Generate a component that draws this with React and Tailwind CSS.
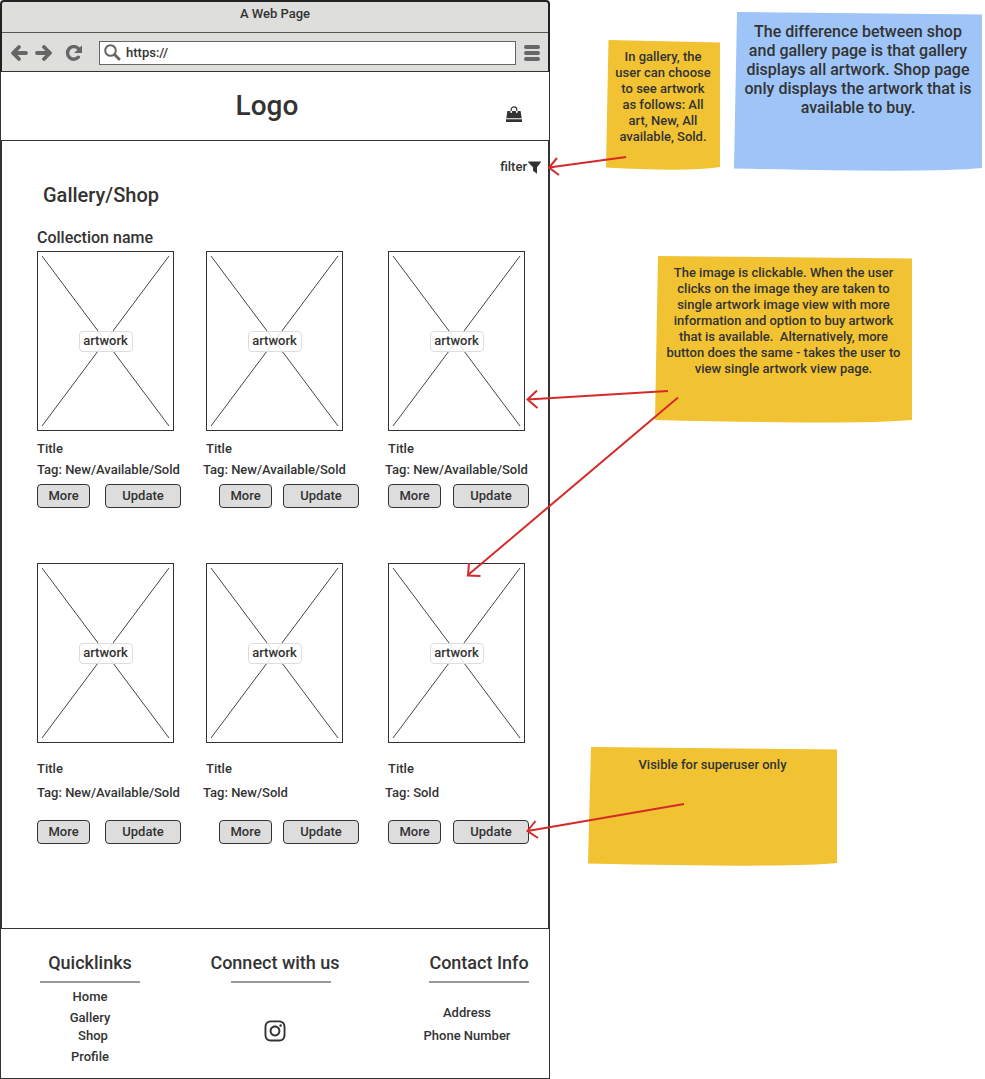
import { FaInstagram } from "react-icons/fa6";

const row1 = [
  { tag: "New/Available/Sold" },
  { tag: "New/Available/Sold" },
  { tag: "New/Available/Sold" },
];

const row2 = [{ tag: "New/Available/Sold" }, { tag: "New/Sold" }, { tag: "Sold" }];

const imageOffsets = ["", "ml-[3px]", "ml-[3px]"];
const buttonOffsets = ["gap-[15px]", "ml-4 gap-[11px]", "ml-[3px] gap-3"];

function BackIcon() {
  return (
    <svg className="size-[18px]" viewBox="0 0 18 18" fill="none" stroke="#666" strokeWidth="3.8" strokeLinecap="round" strokeLinejoin="round">
      <path d="M9 3 L3 9 L9 15 M4 9 H16" />
    </svg>
  );
}

function ForwardIcon() {
  return (
    <svg className="size-[18px]" viewBox="0 0 18 18" fill="none" stroke="#666" strokeWidth="3.8" strokeLinecap="round" strokeLinejoin="round">
      <path d="M9 3 L15 9 L9 15 M14 9 H2" />
    </svg>
  );
}

function ReloadIcon() {
  return (
    <svg className="size-[18px]" viewBox="0 0 18 18">
      <path d="M13.2 4.4 A6.3 6.3 0 1 0 13.4 13.2" fill="none" stroke="#666" strokeWidth="3.4" strokeLinecap="round" />
      <path d="M17 1.2 V9 H9.2 Z" fill="#666" />
    </svg>
  );
}

function SearchIcon() {
  return (
    <svg className="size-[17px] shrink-0" viewBox="0 0 17 17" fill="none" stroke="#666" strokeLinecap="round">
      <circle cx="6.5" cy="6.5" r="5.3" strokeWidth="2" />
      <path d="M11 11 L15 15" strokeWidth="3" />
    </svg>
  );
}

function MenuIcon() {
  return (
    <svg className="size-4" viewBox="0 0 16 16" fill="#666">
      <rect width="16" height="4" rx="2" />
      <rect y="6" width="16" height="4" rx="2" />
      <rect y="12" width="16" height="4" rx="2" />
    </svg>
  );
}

function BagIcon() {
  return (
    <svg className="size-4" viewBox="0 0 16 16">
      <path d="M5.2 5 V3.6 A2.8 2.8 0 0 1 10.8 3.6 V5" fill="none" stroke="#333" strokeWidth="1.2" />
      <path d="M1.4 5 H4.3 V6 A0.9 0.9 0 0 0 6.1 6 V5 H9.9 V6 A0.9 0.9 0 0 0 11.7 6 V5 H14.6 L15.7 12.2 H0.3 Z M0 13.2 H16 V16 H0 Z" fill="#333" />
    </svg>
  );
}

function FunnelIcon() {
  return (
    <svg className="h-[13px] w-[13px]" viewBox="0 0 13 13" fill="#333">
      <path d="M0.3 0.5 H12.7 V1.6 L9 6.2 V12.8 L5 9.8 V6.2 L0.3 1.6 Z" />
    </svg>
  );
}

function Artwork({ offset }) {
  return (
    <a href="#artwork" className={`${offset} grid h-[180px] w-[137px] place-items-center border border-[#333]`}>
      <svg className="col-start-1 row-start-1 size-full" viewBox="0 0 135 178" stroke="#444" strokeWidth="1">
        <path d="M4 4 L131 174 M131 4 L4 174" />
      </svg>
      <span className="z-10 col-start-1 row-start-1 flex h-[21px] w-[54px] items-center justify-center rounded border border-[#ddd] bg-white/85">
        artwork
      </span>
    </a>
  );
}

function Button({ children, size }) {
  return (
    <button type="button" className={`${size} h-6 cursor-pointer rounded border border-[#333] bg-[#ddd]`}>
      {children}
    </button>
  );
}

function Card({ tag, column, spacious }) {
  return (
    <article className="flex flex-col">
      <Artwork offset={imageOffsets[column]} />
      <h3 className={`${imageOffsets[column]} ${spacious ? "mt-[18px]" : "mt-[10px]"} leading-4`}>Title</h3>
      <p className={`${spacious ? "mt-2 mb-[19px]" : "mt-[5px] mb-[6px]"} whitespace-nowrap leading-4`}>Tag: {tag}</p>
      <div className={`${buttonOffsets[column]} flex`}>
        <Button size="w-[53px]">More</Button>
        <Button size="w-[76px]">Update</Button>
      </div>
    </article>
  );
}

function Note({ className, color, path, viewBox, children }) {
  return (
    <aside className={`${className} relative shrink-0 text-center`}>
      <svg className="absolute inset-0 size-full" viewBox={viewBox} preserveAspectRatio="none">
        <path d={path} fill={color} />
      </svg>
      <p className="relative whitespace-pre">{children}</p>
    </aside>
  );
}

function Arrows() {
  return (
    <svg
      className="pointer-events-none absolute inset-0 z-20 size-full"
      viewBox="0 0 985 1079"
      preserveAspectRatio="none"
      fill="none"
      stroke="#d42a2a"
      strokeWidth="2"
    >
      <path d="M626 157 L549 167.5 M557 158 L549 167.5 L559 175" />
      <path d="M668 391 L527.5 399.5 M537 390.5 L527.5 399.5 L537.5 408" />
      <path d="M678 397.5 L468 575 M469 563 L468 575.5 L480.5 576" />
      <path d="M684 804 L527.5 831 M535.5 821 L527.5 831 L538 838" />
    </svg>
  );
}

function FooterHeading({ children, rule }) {
  return (
    <>
      <h2 className="text-[18px] leading-6 whitespace-nowrap">{children}</h2>
      <hr className={`${rule} mt-[6px] h-[2px] w-[100px] border-0 bg-[#999]`} />
    </>
  );
}

export default function App() {
  return (
    <div className="relative grid grid-cols-[550fr_435fr] bg-white font-['Roboto','Liberation_Sans',sans-serif] text-[13px] font-medium text-[#333]">
      <div className="flex flex-col">
        <div className="rounded-t border-x-2 border-t-2 border-b border-[#222] border-b-[#333] bg-[#dededc]">
          <div className="flex h-[31px] justify-center border-b border-[#555] pt-1 leading-4">A Web Page</div>
          <div className="flex h-[38px] items-center pt-px pr-2 pl-2">
            <button type="button" aria-label="Back"><BackIcon /></button>
            <button type="button" aria-label="Forward" className="ml-[7px]"><ForwardIcon /></button>
            <button type="button" aria-label="Reload" className="ml-3"><ReloadIcon /></button>
            <label className="ml-4 flex h-6 flex-1 items-center gap-[5px] border border-[#666] bg-white pl-1">
              <SearchIcon />
              <input type="text" aria-label="Address" defaultValue="https://" className="min-w-0 flex-1 outline-none" />
            </label>
            <button type="button" aria-label="Menu" className="ml-2"><MenuIcon /></button>
          </div>
        </div>

        <header className="grid h-[69px] grid-cols-3 items-center border-x border-b border-[#333] px-[27px]">
          <h1 className="col-start-2 justify-self-center pr-4 text-[28px] leading-8">Logo</h1>
          <button type="button" aria-label="Shopping bag" className="mt-4 justify-self-end"><BagIcon /></button>
        </header>

        <main className="border-x-2 border-[#333] pb-[84px]">
          <div className="flex justify-end pt-[18px] pr-[7px]">
            <button type="button" className="flex items-center gap-px leading-4">
              filter <FunnelIcon />
            </button>
          </div>
          <h2 className="mt-2 ml-[41px] text-[20px] leading-6">Gallery/Shop</h2>
          <h3 className="mt-[21px] ml-[35px] text-[16px] leading-5">Collection name</h3>
          <div className="mt-[3px] grid grid-cols-[166fr_182fr_161fr] gap-y-[55px] pr-[2px] pl-[35px]">
            {row1.map((item, i) => (
              <Card key={i} column={i} {...item} />
            ))}
            {row2.map((item, i) => (
              <Card key={i} column={i} spacious {...item} />
            ))}
          </div>
        </main>

        <footer className="grid h-[151px] grid-cols-[178fr_192fr_178fr] border border-[#333] pt-[22px] text-center">
          <nav className="flex flex-col items-center">
            <FooterHeading rule="">Quicklinks</FooterHeading>
            <a href="#home" className="mt-[6px] leading-4">Home</a>
            <a href="#gallery" className="mt-[5px] leading-4">Gallery</a>
            <a href="#shop" className="mt-[2px] pl-[6px] leading-4">Shop</a>
            <a href="#profile" className="mt-[5px] leading-4">Profile</a>
          </nav>
          <section className="flex flex-col items-center">
            <FooterHeading rule="ml-3">Connect with us</FooterHeading>
            <a href="#instagram" aria-label="Instagram" className="mt-9">
              <FaInstagram className="size-6" />
            </a>
          </section>
          <section className="flex flex-col items-center pl-[38px]">
            <FooterHeading rule="">Contact Info</FooterHeading>
            <p className="mt-[22px] pr-6 leading-4">Address</p>
            <p className="mt-[7px] pr-6 leading-4 whitespace-nowrap">Phone Number</p>
          </section>
        </footer>
      </div>

      <div className="flex flex-col pt-3">
        <div className="flex items-start gap-[14px] pl-14">
          <Note
            className="mt-7 h-[130px] w-[114px] pt-[9px] leading-4"
            color="#f1c232"
            viewBox="0 0 114 130"
            path="M2.5 0 L114 2.5 V127 Q80 132 0 127.5 Z"
          >
            {"In gallery, the\nuser can choose\nto see artwork\nas follows: All\nart, New, All\navailable, Sold."}
          </Note>
          <Note
            className="h-[159px] w-[248px] pt-[10px] text-[16px] leading-[19px]"
            color="#9fc5f8"
            viewBox="0 0 248 159"
            path="M3 0 L248 2.5 V156 Q200 161 0 156.5 Z"
          >
            {"The difference between shop\nand gallery page is that gallery\ndisplays all artwork. Shop page\nonly displays the artwork that is\navailable to buy."}
          </Note>
        </div>
        <Note
          className="mt-[85px] ml-[105px] h-[167px] w-[257px] pt-[9px] leading-4"
          color="#f1c232"
          viewBox="0 0 257 167"
          path="M3 0 L257 2.5 V164 Q200 169 0 164 Z"
        >
          {"The image is clickable. When the user\nclicks on the image they are taken to\nsingle artwork image view with more\ninformation and option to buy artwork\nthat is available.  Alternatively, more\nbutton does the same - takes the user to\nview single artwork view page."}
        </Note>
        <Note
          className="mt-[324px] ml-[38px] h-[119px] w-[249px] pt-[10px] leading-4"
          color="#f1c232"
          viewBox="0 0 249 119"
          path="M3 0 L249 2.5 V116 Q200 121 0 116.5 Z"
        >
          Visible for superuser only
        </Note>
      </div>

      <Arrows />
    </div>
  );
}
